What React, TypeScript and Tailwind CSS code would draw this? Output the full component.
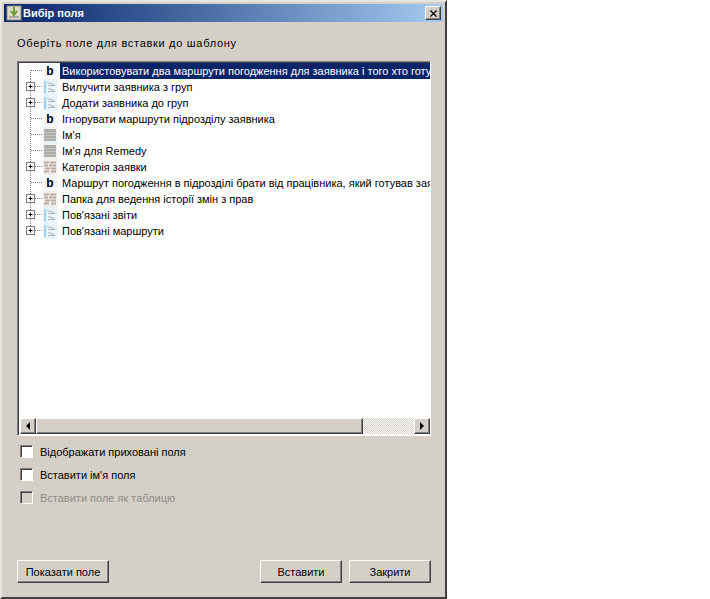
import React from "react";
import { X } from "lucide-react";

type Kind = "bool" | "text" | "ref" | "cat";

const ROWS: { label: string; kind: Kind; plus?: boolean; selected?: boolean }[] = [
  { label: "Використовувати два маршрути погодження для заявника і того хто готує заявку", kind: "bool", selected: true },
  { label: "Вилучити заявника з груп", kind: "ref", plus: true },
  { label: "Додати заявника до груп", kind: "ref", plus: true },
  { label: "Ігнорувати маршрути підрозділу заявника", kind: "bool" },
  { label: "Ім'я", kind: "text" },
  { label: "Ім'я для Remedy", kind: "text" },
  { label: "Категорія заявки", kind: "cat", plus: true },
  { label: "Маршрут погодження в підрозділі брати від працівника, який готував заявку", kind: "bool" },
  { label: "Папка для ведення історії змін з прав", kind: "cat", plus: true },
  { label: "Пов'язані звіти", kind: "ref", plus: true },
  { label: "Пов'язані маршрути", kind: "ref", plus: true },
];

const FONT = "font-['Liberation_Sans',Arial,sans-serif]";

function Connector({ plus, last, first }: { plus?: boolean; last?: boolean; first?: boolean }) {
  return (
    <svg width="23" height="16" className="shrink-0">
      <line x1="10.5" y1={first ? 7 : 0} x2="10.5" y2={last ? 8 : 16} stroke="#808080" strokeDasharray="1 1" />
      <line x1="11" y1="7.5" x2="23" y2="7.5" stroke="#808080" strokeDasharray="1 1" />
      {plus && (
        <g>
          <rect x="6.5" y="3.5" width="8" height="8" fill="#fff" stroke="#808080" />
          <path d="M8.5 7.5h4M10.5 5.5v4" stroke="#000" />
        </g>
      )}
    </svg>
  );
}

function FieldIcon({ kind }: { kind: Kind }) {
  if (kind === "bool") {
    return (
      <span className="flex h-4 w-[14px] shrink-0 items-center justify-center rounded-sm bg-[#f4f6fa] font-['Liberation_Sans',sans-serif] text-[12px] leading-none font-bold text-black">
        b
      </span>
    );
  }
  if (kind === "text") {
    return (
      <svg width="14" height="16" className="shrink-0">
        <rect width="14" height="16" fill="#eef3f6" />
        <rect x="1" y="2" width="12" height="12" fill="#adadaa" />
        <path d="M1 5.5h12M1 8.5h12M1 11.5h12" stroke="#c6c6c3" />
      </svg>
    );
  }
  if (kind === "cat") {
    return (
      <svg width="14" height="16" className="shrink-0">
        <rect width="14" height="16" fill="#f1eeea" />
        <path d="M1 3.5h5M7 3.5h6M1 6.5h4M6 6.5h7M2 9.5h5M8 9.5h5M1 12.5h5M8 12.5h5" stroke="#bcaaa2" strokeWidth="2" />
      </svg>
    );
  }
  return (
    <svg width="14" height="16" className="shrink-0">
      <rect width="14" height="16" rx="1" fill="#e8f3f9" />
      <path d="M2 2v12" stroke="#9fd3ec" strokeWidth="2" />
      <path d="M4 3.5l7 2M5 6.5h7M5 9.5l6 2M5 12.5h7" stroke="#aab4bd" />
    </svg>
  );
}

function Bevel({ className, children }: { className: string; children?: React.ReactNode }) {
  return (
    <div className={`border border-t-white border-l-white border-r-[#404040] border-b-[#404040] shadow-[inset_-1px_-1px_0_#808080] ${className}`}>
      {children}
    </div>
  );
}

function Check({ label, disabled }: { label: string; disabled?: boolean }) {
  return (
    <div className="flex h-[13px] items-center gap-[7px]">
      <span
        className={`h-[13px] w-[13px] border border-t-[#808080] border-l-[#808080] border-r-white border-b-white shadow-[inset_1px_1px_0_#404040] ${
          disabled ? "bg-[#d4d0c8]" : "bg-white"
        }`}
      />
      <span className={`pt-[1px] ${disabled ? "text-[#8f8c86]" : "text-black"}`}>{label}</span>
    </div>
  );
}

function Btn({ label, width }: { label: string; width: string }) {
  return (
    <Bevel className={`flex h-[23px] items-center justify-center pt-[1px] ${width}`}>
      <span>{label}</span>
    </Bevel>
  );
}

export default function App() {
  return (
    <div className={`h-[599px] w-[710px] bg-white ${FONT} text-[11px] leading-none text-black`}>
      <div className="flex h-[599px] w-[447px] flex-col border-2 border-t-[#e8e6e0] border-l-[#e8e6e0] border-r-[#404040] border-b-[#404040] bg-[#d4d0c8] p-[2px]">
        {/* Title bar */}
        <div className="flex h-[18px] shrink-0 items-center justify-between bg-gradient-to-r from-[#0a246a] to-[#a6caf0] pr-[2px] pl-[2px]">
          <div className="flex items-center gap-[1px]">
            <svg width="16" height="16" className="shrink-0">
              <rect x="1" y="1" width="14" height="14" fill="#dcdcc8" stroke="#8a8a78" />
              <path d="M8 2v7M5 6l3 4 3-4" stroke="#6f9a3a" strokeWidth="2" fill="none" />
              <path d="M3 12h10" stroke="#777" />
            </svg>
            <span className="pt-[1px] font-bold text-white">Вибір поля</span>
          </div>
          <Bevel className="flex h-[14px] w-[16px] items-center justify-center bg-[#d4d0c8]">
            <X size={11} strokeWidth={2.5} color="#000" />
          </Bevel>
        </div>

        <div className="flex flex-1 flex-col pt-[16px] pr-[12px] pb-[12px] pl-[13px]">
          <p className="h-[13px] tracking-[0.7px]">Оберіть поле для вставки до шаблону</p>

          {/* Tree */}
          <div className="mt-[10px] flex h-[375px] flex-col border border-t-[#808080] border-l-[#808080] border-r-white border-b-white bg-white shadow-[inset_1px_1px_0_#404040]">
            <div className="flex-1 overflow-hidden pt-[1px] pl-[2px]">
              {ROWS.map((row, i) => (
                <div key={row.label} className="flex h-4 items-center">
                  <Connector plus={row.plus} first={i === 0} last={i === ROWS.length - 1} />
                  <FieldIcon kind={row.kind} />
                  <span
                    className={`ml-[3px] flex h-4 min-w-0 flex-1 items-center overflow-hidden pl-[2px] whitespace-nowrap ${
                      row.selected ? "bg-[#0a246a] text-white" : ""
                    }`}
                  >
                    {row.label}
                  </span>
                </div>
              ))}
            </div>
            {/* Horizontal scrollbar */}
            <div className="mb-[1px] ml-[2px] flex h-4 shrink-0">
              <Bevel className="flex h-4 w-4 items-center justify-center bg-[#d4d0c8]">
                <span className="h-0 w-0 border-y-4 border-r-4 border-y-transparent border-r-black" />
              </Bevel>
              <Bevel className="h-4 w-[327px] bg-[#d4d0c8]" />
              <div className="h-4 flex-1 bg-[repeating-conic-gradient(#fff_0_25%,#d4d0c8_0_50%)] bg-[length:2px_2px]" />
              <Bevel className="flex h-4 w-4 items-center justify-center bg-[#d4d0c8]">
                <span className="h-0 w-0 border-y-4 border-l-4 border-y-transparent border-l-black" />
              </Bevel>
            </div>
          </div>

          {/* Options */}
          <div className="mt-[9px] flex flex-col gap-[10px] pl-[3px]">
            <Check label="Відображати приховані поля" />
            <Check label="Вставити ім'я поля" />
            <Check label="Вставити поле як таблицю" disabled />
          </div>

          {/* Buttons */}
          <div className="mt-auto flex items-center">
            <Btn label="Показати поле" width="w-[92px]" />
            <div className="ml-auto flex gap-[7px]">
              <Btn label="Вставити" width="w-[82px]" />
              <Btn label="Закрити" width="w-[82px]" />
            </div>
          </div>
        </div>
      </div>
    </div>
  );
}
